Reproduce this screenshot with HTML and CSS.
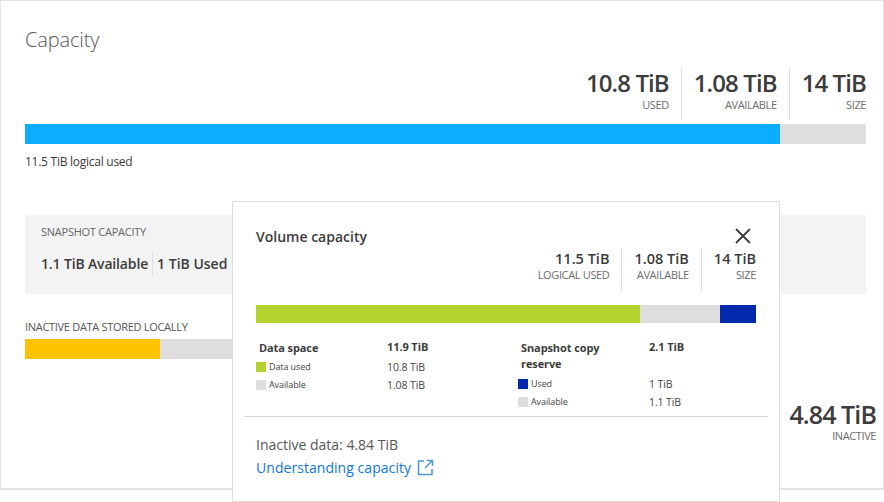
FILE: index.html
```html
<!DOCTYPE html>
<html lang="en">
<head>
<meta charset="utf-8">
<title>Capacity</title>
<link rel="stylesheet" href="styles.css">
</head>
<body>
<main class="card">
  <h1 class="title">Capacity</h1>
  <div class="stats">
    <div class="stat"><div class="num">10.8 TiB</div><div class="lbl">USED</div></div>
    <div class="stat"><div class="num">1.08 TiB</div><div class="lbl">AVAILABLE</div></div>
    <div class="stat"><div class="num">14 TiB</div><div class="lbl">SIZE</div></div>
  </div>
  <div class="bar main-bar"><div class="fill blue"></div></div>
  <div class="logical">11.5 TiB logical used</div>
  <section class="snapshot">
    <div class="snap-title">SNAPSHOT CAPACITY</div>
    <div class="snap-vals"><span class="snap-a">1.1 TiB Available</span><span class="snap-b">1 TiB Used</span></div>
  </section>
  <div class="inactive-title">INACTIVE DATA STORED LOCALLY</div>
  <div class="bar inactive-bar"><div class="fill yellow"></div></div>
  <div class="inactive-stat"><div class="num big">4.84 TiB</div><div class="lbl">INACTIVE</div></div>
</main>

<aside class="popover">
  <div class="pop-head">
    <h2 class="pop-title">Volume capacity</h2>
    <svg class="close" width="16" height="16" viewBox="0 0 16 16"><path d="M1 1L15 15M15 1L1 15" stroke="#3c3c3c" stroke-width="1.8" fill="none"/></svg>
  </div>
  <div class="pop-stats">
    <div class="pstat"><div class="pnum">11.5 TiB</div><div class="plbl">LOGICAL USED</div></div>
    <div class="pstat"><div class="pnum">1.08 TiB</div><div class="plbl">AVAILABLE</div></div>
    <div class="pstat"><div class="pnum">14 TiB</div><div class="plbl">SIZE</div></div>
  </div>
  <div class="pop-bar"><div class="seg green"></div><div class="seg grey"></div><div class="seg navy"></div></div>
  <div class="details">
    <div class="col col-left">
      <div class="row head"><span class="name">Data space</span><span class="val">11.9 TiB</span></div>
      <div class="row item"><span class="name"><i class="sw green"></i>Data used</span><span class="val">10.8 TiB</span></div>
      <div class="row item"><span class="name"><i class="sw grey"></i>Available</span><span class="val">1.08 TiB</span></div>
    </div>
    <div class="col col-right">
      <div class="row head"><span class="name">Snapshot copy reserve</span><span class="val">2.1 TiB</span></div>
      <div class="row item"><span class="name"><i class="sw navy"></i>Used</span><span class="val">1 TiB</span></div>
      <div class="row item"><span class="name"><i class="sw grey"></i>Available</span><span class="val">1.1 TiB</span></div>
    </div>
  </div>
  <div class="pop-foot">
    <div class="foot-text">Inactive data: 4.84 TiB</div>
    <a class="foot-link" href="#">Understanding capacity
      <svg width="17" height="17" viewBox="0 0 17 17" fill="none" stroke="#4a96da" stroke-width="1.5"><path d="M7 2H1.5V15.5H15V10M10 1.5H15.5V7M15.2 1.8L8 9"/></svg>
    </a>
  </div>
  <span class="arrow"></span>
</aside>
</body>
</html>
```
FILE: styles.css
```css
* { box-sizing: border-box; }
html, body { margin: 0; padding: 0; background: #fff; }
body {
  width: 884px;
  height: 502px;
  overflow: hidden;
  position: relative;
  font-family: "Open Sans", "Noto Sans", sans-serif;
  color: #3c3c3c;
}
.card {
  width: 884px;
  height: 490px;
  border: 1px solid #e2e2e2;
  border-width: 1px 1px 2px 1px;
  padding: 0 17px 0 24px;
  position: relative;
}
.title {
  margin: 0;
  padding-top: 24px;
  height: 66px;
  font-size: 20px;
  line-height: 30px;
  font-weight: 300;
  color: #555;
  letter-spacing: -0.15px;
}
.stats { display: flex; justify-content: flex-end; height: 53px; margin-bottom: 4px; }
.stat { padding: 0 12px; border-left: 1px solid #ddd; text-align: right; }
.stat:first-child { border-left: 0; }
.stat:last-child { padding-right: 0; }
.num { font-size: 24px; line-height: 26px; font-weight: 600; margin-top: 3px; letter-spacing: -0.9px; white-space: nowrap; }
.num.big { font-size: 25px; }
.lbl { font-size: 11px; line-height: 14px; color: #6c6c6c; letter-spacing: -0.4px; margin-top: 2px; }
.bar { background: #dedede; height: 20px; }
.fill { height: 100%; }
.blue { background: #0dadfd; width: 755px; }
.logical { font-size: 12px; line-height: 16px; margin-top: 10px; letter-spacing: -0.26px; }
.snapshot { margin-top: 45px; height: 79px; background: #f3f3f3; padding: 9px 16px; }
.snap-title { font-size: 11px; line-height: 16px; color: #666; letter-spacing: -0.25px; }
.snap-vals { display: flex; margin-top: 13px; font-size: 14px; line-height: 22px; font-weight: 600; }
.snap-a { padding-right: 4px; border-right: 1px solid #ddd; letter-spacing: -0.15px; }
.snap-b { padding-left: 4px; }
.inactive-title { font-size: 11px; line-height: 16px; margin-top: 25px; color: #555; letter-spacing: -0.3px; }
.inactive-bar { margin-top: 4px; width: 500px; }
.yellow { background: #fec200; width: 135px; }
.inactive-stat { position: absolute; right: 7px; top: 397px; text-align: right; }
.popover {
  position: absolute;
  left: 232px;
  top: 201px;
  width: 548px;
  height: 301px;
  background: #fff;
  border: 1px solid #ddd;
  padding: 0 23px;
}
.arrow {
  position: absolute;
  left: 268px;
  top: -7px;
  width: 11px;
  height: 11px;
  background: #fff;
  border-top: 1px solid #e4e4e4;
  border-left: 1px solid #e4e4e4;
  transform: rotate(45deg);
  z-index: -1;
}
.pop-head { display: flex; justify-content: space-between; align-items: flex-start; height: 46px; padding-top: 24px; }
.pop-title { margin: 0; font-size: 14px; line-height: 22px; font-weight: 600; }
.close { margin-top: 2px; margin-right: 5px; }
.pop-stats { display: flex; justify-content: flex-end; height: 43px; }
.pstat { padding: 0 12px; border-left: 1px solid #ddd; text-align: right; }
.pstat:first-child { border-left: 0; }
.pstat:last-child { padding-right: 0; }
.pnum { font-size: 14.5px; line-height: 18px; font-weight: 600; margin-top: 2px; white-space: nowrap; }
.plbl { font-size: 11px; line-height: 14px; color: #6c6c6c; letter-spacing: -0.35px; }
.pop-bar { display: flex; height: 18px; margin-top: 14px; }
.seg.green { width: 384px; }
.seg.grey { width: 80px; }
.seg.navy { width: 36px; }
.green { background: #b2d22e; }
.grey { background: #dedede; }
.navy { background: #002aab; }
.details { display: flex; height: 94px; margin: 0 -12px; padding: 17px 0 0 12px; border-bottom: 1px solid #d6d6d6; }
.col { flex: none; }
.col-left { width: 265px; }
.col-right { width: 247px; }
.row { display: flex; }
.head { font-size: 11px; line-height: 16px; font-weight: 700; letter-spacing: -0.1px; margin-bottom: 4px; }
.col-right .head { margin-bottom: 5px; }
.head .name { flex: none; width: 131px; padding-left: 3px; }
.head .val { margin-top: -1px; }
.col-right .head .name { width: 128px; padding: 0 20px 0 0; }
.item { font-size: 9px; line-height: 14px; color: #444; margin-top: 4px; align-items: center; letter-spacing: -0.1px; }
.item .val { font-size: 10.5px; letter-spacing: -0.1px; }
.item .name { flex: none; width: 131px; display: flex; align-items: center; }
.col-right .item .name { margin-left: -3px; }
.sw { width: 10px; height: 10px; margin-right: 3px; flex: none; }
.pop-foot { padding-top: 16px; }
.foot-text { font-size: 14px; line-height: 23px; color: #555; }
.foot-link { display: flex; align-items: center; gap: 6px; font-size: 14px; line-height: 23px; color: #0f78d4; text-decoration: none; letter-spacing: 0.05px; }
```
